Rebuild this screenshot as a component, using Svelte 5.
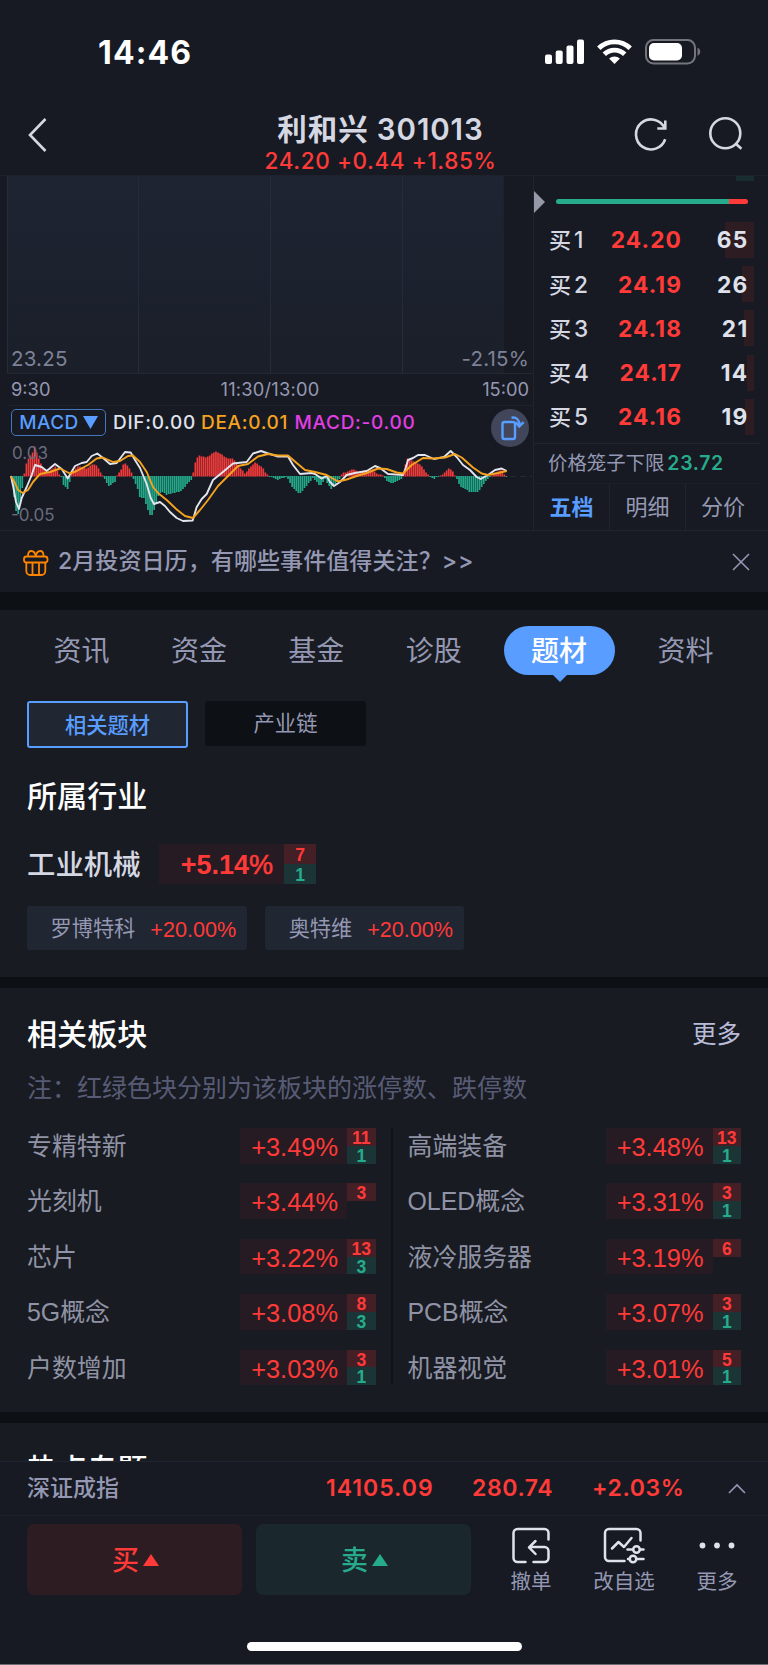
<script>
  const bids = [
    { n: 1, price: "24.20", vol: 65, depth: 29 },
    { n: 2, price: "24.19", vol: 26, depth: 12 },
    { n: 3, price: "24.18", vol: 21, depth: 10 },
    { n: 4, price: "24.17", vol: 14, depth: 7 },
    { n: 5, price: "24.16", vol: 19, depth: 9 }
  ];
  const tabs = ["资讯", "资金", "基金", "诊股", "题材", "资料"];
  const stocks = [
    { name: "罗博特科", pct: "+20.00%" },
    { name: "奥特维", pct: "+20.00%" }
  ];
  // up = 涨停数, down = 跌停数
  const sectors = [
    [
      { name: "专精特新", pct: "+3.49%", up: 11, down: 1 },
      { name: "光刻机", pct: "+3.44%", up: 3 },
      { name: "芯片", pct: "+3.22%", up: 13, down: 3 },
      { name: "5G概念", pct: "+3.08%", up: 8, down: 3 },
      { name: "户数增加", pct: "+3.03%", up: 3, down: 1 }
    ],
    [
      { name: "高端装备", pct: "+3.48%", up: 13, down: 1 },
      { name: "OLED概念", pct: "+3.31%", up: 3, down: 1 },
      { name: "液冷服务器", pct: "+3.19%", up: 6 },
      { name: "PCB概念", pct: "+3.07%", up: 3, down: 1 },
      { name: "机器视觉", pct: "+3.01%", up: 5, down: 1 }
    ]
  ];

  let active = $state("题材");

  // MACD histogram: [x, height], bars are interpolated between the points
  const hist = [
    [11, 0], [12.7, -10], [15, -29], [17, -39], [19, -37], [21.3, -20], [23.3, -4],
    [25, 8], [28, 18], [32, 22], [34.7, 30], [37, 23], [40, 15], [43, 8], [47, 3],
    [55, 10], [59, 3], [61.7, -1], [63.3, -9], [67.7, -13], [70, -5], [71.7, 4],
    [78, 10], [87, 8], [93, 13], [97, 11], [101, 3], [103, 0], [107, -7], [109, -10],
    [115, -6], [117, 1], [121.7, 8], [124.3, 14], [128, 10], [131.7, 4], [133.3, -2],
    [137, -11], [140, -22], [144, -22], [147, -31], [151, -42], [154, -34], [157, -24],
    [159, -17], [163, -16], [167, -19], [172, -17], [180, -16], [185, -11], [192.5, -2],
    [194.3, 11], [197, 18], [199, 21], [207, 19], [215, 25], [222, 22], [227, 18],
    [233, 18], [237, 13], [245, 3], [250, 9], [255, 14], [260, 11], [263, 8], [267, 2],
    [270, 0], [277, -4], [286.7, -1], [293, -12], [299, -18], [305, -12], [313, -2],
    [320, -10], [325, -3], [331, -13], [340, -2], [342, 3], [352, 7], [360, 5],
    [372, 7], [377, 3], [383, 1], [386, -4], [392, -8], [402, -3], [404, 6],
    [407, 18], [412, 16], [415, 15], [422, 10], [427, 3], [430, -1], [434, -3],
    [438, 0], [443, 2], [449, 8], [453, 5], [456, -1], [460, -10], [470, -16],
    [478, -16], [483, -9], [490, 0], [497, 5], [502, 6], [505, 1], [507, -2]
  ];
  const at = x => {
    const i = hist.findIndex(p => p[0] >= x);
    if (i < 1) return 0;
    const [x0, y0] = hist[i - 1];
    const [x1, y1] = hist[i];
    return y0 + ((y1 - y0) * (x - x0)) / (x1 - x0);
  };
  const bars = [];
  for (let x = 12; x < 507.5; x += 2.06) bars.push({ x, h: Math.round(at(Math.min(x, 507))) });

  const dif = [
    [11, 68], [13.3, 79], [16, 94], [19, 101], [21.7, 90], [26.7, 79], [31.7, 67], [35, 57],
    [41.7, 59], [46.7, 63], [55, 56], [61.7, 61], [67.7, 70.5], [75, 58], [81.7, 55],
    [86.7, 54], [91.7, 48], [97.3, 45.5], [103, 50], [110, 56], [116.7, 55], [125, 44],
    [130.7, 44.5], [135, 52], [140, 60], [146.7, 76], [150.7, 90], [154, 96], [160, 94],
    [165, 98], [170, 104], [176.7, 110], [183, 113], [192.7, 112.5], [196.7, 99],
    [201.7, 91], [206.7, 86], [213, 72], [221.7, 65], [233, 55.5], [246.7, 54],
    [253, 45.5], [261, 43], [266.7, 45], [278, 48.5], [288, 48.5], [293, 57], [300, 66],
    [311.7, 65], [315, 66], [321.7, 70.5], [326.7, 68], [330, 74], [334, 78], [340, 74],
    [346.7, 67], [355, 65], [366.7, 63], [375, 58], [380, 60], [388, 66], [403, 67],
    [405.7, 60], [408, 52], [413, 50], [418, 47], [425, 47], [434, 51], [444, 49],
    [450.7, 43], [456.7, 49], [463, 57], [470, 62], [476.7, 69], [480.7, 71], [488, 67],
    [495, 62], [501.7, 60.5], [506.7, 63]
  ];
  const dea = [
    [11, 68.5], [15, 75], [18, 82], [22.7, 85], [28, 82], [33, 74], [40, 66], [50, 64],
    [60, 60.5], [70, 65.5], [76.7, 63], [88, 57], [96.7, 50.5], [103, 49.5], [113, 54],
    [120, 53], [128, 48], [133, 47.5], [140, 54], [146.7, 64], [153, 79], [158, 85],
    [166.7, 92], [176.7, 101.5], [185, 108], [193, 110], [200, 102], [208, 92],
    [218, 78], [230, 66], [238, 58], [248, 56], [258, 48.5], [268, 46], [278, 47.5],
    [288, 47.5], [296.7, 55], [305, 62], [315, 64], [326.7, 67], [338, 73.5],
    [346.7, 71.5], [356.7, 68], [366.7, 65], [378, 60.5], [386.7, 61], [396.7, 64.5],
    [403, 65.5], [411.7, 57], [423, 50], [433, 50.5], [445, 49.5], [455, 46],
    [461.7, 49.5], [473, 59.5], [481.7, 65.5], [488, 67], [498, 65], [506.7, 63]
  ];
  const line = pts => pts.map(p => p.join(",")).join(" ");
</script>

<div class="phone">
  <div class="status">
    <span class="time">14:46</span>
    <svg width="156" height="26" viewBox="0 0 156 26">
      <g fill="#fff">
        <rect x="0" y="15.5" width="7" height="9.5" rx="2" />
        <rect x="10.7" y="11.5" width="7" height="13.5" rx="2" />
        <rect x="21.5" y="6.5" width="7" height="18.5" rx="2" />
        <rect x="32" y="0.5" width="7" height="24.5" rx="2" />
        <path d="M69.500 25l-5.400-5.400a8.300 8.300 0 0 1 10.800 0z" />
      </g>
      <g fill="none" stroke="#fff" stroke-width="4.8">
        <path d="M53.800 9.300a22.300 22.300 0 0 1 31.400 0" />
        <path d="M59.300 15.300a14.500 14.500 0 0 1 20.400 0" />
      </g>
      <rect x="101" y="1" width="49" height="23.500" rx="7.5" fill="none" stroke="#73757b" stroke-width="2" />
      <rect x="104" y="4" width="33" height="17.5" rx="5" fill="#fff" />
      <path d="M152.500 8.500q2.800 1.300 2.800 4.300t-2.800 4.300z" fill="#73757b" />
    </svg>
  </div>

  <header>
    <svg class="back" width="20" height="36" viewBox="0 0 20 36">
      <path d="M17.500 2L2 18l15.500 16" />
    </svg>
    <div class="title">
      <h1>利和兴 301013</h1>
      <p>24.20 +0.44 +1.85%</p>
    </div>
    <svg class="refresh" width="36" height="36" viewBox="0 0 36 36">
      <path d="M32.200 22.300A15 15 0 1 1 31.500 10.800M32.300 3.500v8h-8" />
    </svg>
    <svg class="search" width="36" height="36" viewBox="0 0 36 36">
      <circle cx="17.3" cy="16.300" r="15" /><path d="M27.800 26.800l5.600 5" />
    </svg>
  </header>

  <div class="market">
    <div class="chart">
      <div class="price">
        <div class="grid"><i></i><i></i><i></i><i></i></div>
        <div class="limits"><span>23.25</span><span>-2.15%</span></div>
      </div>
      <div class="hours"><span>9:30</span><span>11:30/13:00</span><span>15:00</span></div>
      <div class="macd">
        <svg class="plot" width="534" height="123" viewBox="0 0 534 123">
          <path d="M10 68.500h522" stroke="#232936" stroke-dasharray="6 4" />
          {#each bars as b}
            <rect
              x={b.x - 0.85}
              y={b.h > 0 ? 68.5 - b.h : 68}
              width="1.7"
              height={Math.max(1, Math.abs(b.h))}
              fill={b.h > 0 ? "#f23a3a" : "#23a98a"} />
          {/each}
          <text x="12" y="50.5">0.03</text>
          <text x="11" y="112.5">-0.05</text>
          <polyline points={line(dif)} stroke="#e2e4ee" />
          <polyline points={line(dea)} stroke="#f5a21f" />
        </svg>
        <div class="legend">
          <button class="pick">MACD<svg width="15" height="13" viewBox="0 0 15 13"><path d="M0 0h15L7.500 13z" fill="#589dff" /></svg></button>
          <span class="dif">DIF:0.00</span>
          <span class="dea">DEA:0.01</span>
          <span class="val">MACD:-0.00</span>
          <button class="rotate" aria-label="横屏">
            <svg width="38" height="38" viewBox="0 0 38 38">
              <rect x="11.500" y="13" width="12.500" height="17" rx="2" />
              <path d="M20.500 8.700c5-.8 8 2.300 8.300 8M24.700 13.200l3.500 4.300 4.500-4.300" />
            </svg>
          </button>
        </div>
      </div>
    </div>

    <div class="book">
      <div class="top">
        <i class="arrow"></i>
        <i class="ratio"></i>
        <i class="ask"></i>
      </div>
      {#each bids as b}
        <div class="bid">
          <span class="lab">买<b>{b.n}</b></span>
          <span class="px">{b.price}</span>
          <span class="vol"><i style="width: {b.depth}px"></i><em>{b.vol}</em></span>
        </div>
      {/each}
      <div class="cage">价格笼子下限<b>23.72</b></div>
      <div class="modes"><span class="on">五档</span><span>明细</span><span>分价</span></div>
    </div>
  </div>

  <div class="notice">
    <svg width="28" height="28" viewBox="0 0 28 28" fill="none" stroke="#ff8400" stroke-width="1.8">
      <rect x="2" y="8.5" width="23.5" height="6" rx="2.5" />
      <path d="M4.300 14.500v8.500a4 4 0 0 0 4 4h11a4 4 0 0 0 4-4v-8.500M10.500 14.500V27M17 14.500V27M6 8c0-3 1-5 3.300-5C12 3 13.300 5.500 13.700 8.300 14.200 5.500 15.500 3 18.200 3c2.300 0 3.300 2 3.300 5" />
    </svg>
    <span>2月投资日历，有哪些事件值得关注？<b>&gt;&gt;</b></span>
    <svg class="close" width="18" height="18" viewBox="0 0 18 18"><path d="M1 1l16 16M17 1L1 17" /></svg>
  </div>

  <section class="theme">
    <nav>
      {#each tabs as t}
        <button class:active={t === active} onclick={() => (active = t)}>{t}</button>
      {/each}
    </nav>
    <div class="switch"><button class="on">相关题材</button><button>产业链</button></div>
    <h2>所属行业</h2>
    <div class="industry">
      <span class="name">工业机械</span>
      <span class="pct">+5.14<small>%</small></span>
      <span class="badge"><i class="up">7</i><i class="down">1</i></span>
    </div>
    <div class="stocks">
      {#each stocks as s}
        <div class="stock"><span>{s.name}</span><b>{s.pct}</b></div>
      {/each}
    </div>
  </section>

  <section class="related">
    <div class="head"><h2>相关板块</h2><a href="#more">更多</a></div>
    <p class="note">注：红绿色块分别为该板块的涨停数、跌停数</p>
    <div class="cols">
      {#each sectors as col}
        <div class="col">
          {#each col as s}
            <div class="row">
              <span class="name">{s.name}</span>
              <span class="pct">{s.pct}</span>
              <span class="badge">
                <i class="up">{s.up}</i>
                {#if s.down}<i class="down">{s.down}</i>{/if}
              </span>
            </div>
          {/each}
        </div>
      {/each}
    </div>
  </section>

  <section class="hot"><h2>热点专题</h2></section>

  <footer>
    <div class="index">
      <span class="name">深证成指</span>
      <b>14105.09</b><b>280.74</b><b>+2.03%</b>
      <svg width="18" height="11" viewBox="0 0 18 11"><path d="M1 10l8-8 8 8" /></svg>
    </div>
    <div class="actions">
      <button class="buy"><span>买</span><i></i></button>
      <button class="sell"><span>卖</span><i></i></button>
      <div class="tool">
        <svg width="40" height="38" viewBox="0 0 40 38">
          <path d="M37 13.500V7a4 4 0 0 0-4-4H6a4 4 0 0 0-4 4v25a4 4 0 0 0 4 4h8M22 36h11a4 4 0 0 0 4-4v-7a4 4 0 0 0-4-4H18M24 15l-6.500 6.300L24 28" transform="translate(.5 -1)" />
        </svg>
        <span>撤单</span>
      </div>
      <div class="tool wide">
        <svg width="42" height="38" viewBox="0 0 42 38">
          <path d="M37.500 13.500V6a4 4 0 0 0-4-4H6a4 4 0 0 0-4 4v24a4 4 0 0 0 4 4h15.500" />
          <path d="M9 21.500l6.500-6.500 5.500 5 7.500-9" />
          <path d="M24.500 22.500h5.500M37 22.500h3.500M25 32h2M33.500 32h7" />
          <circle cx="33.5" cy="22.5" r="3.3" /><circle cx="30" cy="32" r="3.3" />
        </svg>
        <span>改自选</span>
      </div>
      <div class="tool">
        <svg width="40" height="38" viewBox="0 0 40 38">
          <g fill="#dfe1ec" stroke="none"><circle cx="5.5" cy="18.5" r="2.9" /><circle cx="20" cy="18.5" r="2.9" /><circle cx="34.5" cy="18.5" r="2.9" /></g>
        </svg>
        <span>更多</span>
      </div>
    </div>
    <div class="home"></div>
  </footer>
</div>

<style>
  :global(body) {
    margin: 0;
    background: #171a22;
  }
  .phone {
    width: 768px;
    height: 1665px;
    overflow: hidden;
    display: flex;
    flex-direction: column;
    box-sizing: border-box;
    border-bottom: 1px solid #6a6c72;
    background: #171a22;
    color: #9598b3;
    font-family: Inter, "Noto Sans CJK SC", sans-serif;
    line-height: 1.2;
    white-space: nowrap;
  }
  .phone > * {
    flex-shrink: 0;
  }
  h1, h2, p {
    margin: 0;
  }
  i, em {
    font-style: normal;
  }
  button {
    margin: 0;
    padding: 0;
    border: 0;
    background: none;
    color: inherit;
    font: inherit;
  }
  svg {
    display: block;
    flex: none;
  }

  .status {
    height: 104px;
    box-sizing: border-box;
    padding: 0 67px 0 98px;
    display: flex;
    align-items: center;
    justify-content: space-between;
    color: #fff;
  }
  .time {
    padding-top: 2px;
    font-size: 32px;
    font-weight: 700;
    letter-spacing: 1.1px;
  }

  header {
    height: 72px;
    box-sizing: border-box;
    display: grid;
    grid-template-columns: 28px 20px 1fr 36px 39px 36px 24px;
    border-bottom: 1px solid #1e222c;
  }
  header svg {
    margin-top: 13px;
    fill: none;
    stroke: #d5d8e3;
    stroke-width: 2.6;
  }
  .back {
    grid-column: 2;
  }
  .title {
    grid-column: 3;
    padding-left: 46px;
    margin-right: -34px;
    text-align: center;
    color: #d5d8e3;
  }
  h1 {
    height: 50px;
    line-height: 50px;
    font-size: 29.5px;
    font-weight: 600;
    letter-spacing: 0.9px;
  }
  .title p {
    margin-top: -4px;
    line-height: 21px;
    font-size: 22.5px;
    font-weight: 500;
    letter-spacing: 0.6px;
    color: #ff3a38;
  }
  .refresh {
    grid-column: 4;
  }
  .search {
    grid-column: 6;
  }

  .market {
    height: 354px;
    display: flex;
    border-bottom: 1px solid #20242f;
  }
  .chart {
    width: 526px;
    padding-left: 7px;
    border-right: 1px solid #20242f;
  }
  .price {
    height: 197px;
    display: grid;
    border-bottom: 1px solid #232835;
  }
  .grid, .limits {
    grid-area: 1 / 1;
  }
  .grid {
    width: 497px;
    display: grid;
    grid-template-columns: 131px 132px 132px 1fr;
    background: linear-gradient(#1e2432, #1a1f29);
  }
  .grid i {
    border-left: 1px solid #252b38;
  }
  .grid i:last-child {
    border-right: 1px solid #1c212c;
  }
  .limits, .hours {
    display: flex;
    justify-content: space-between;
    padding: 0 4px;
  }
  .limits {
    align-items: flex-end;
    line-height: 28px;
    font-size: 20.5px;
    letter-spacing: 0.2px;
    color: #7e8298;
  }
  .hours {
    height: 31px;
    line-height: 31px;
    font-size: 18.3px;
    border-bottom: 1px solid #1e222c;
  }
  .hours span {
    flex: 1;
  }
  .hours span:nth-child(2) {
    text-align: center;
    letter-spacing: 0.2px;
  }
  .hours span:last-child {
    text-align: right;
  }
  .macd {
    display: grid;
  }
  .plot {
    grid-area: 1 / 1;
    margin: 2px 0 0 -7px;
  }
  .plot polyline {
    fill: none;
    stroke-width: 1.9;
    stroke-linejoin: round;
  }
  .plot text {
    font-size: 17px;
    fill: #686c7e;
  }
  .legend {
    grid-area: 1 / 1;
    height: 40px;
    display: flex;
    align-items: flex-start;
    padding: 3px 5px 0 4px;
    font-size: 19px;
    font-weight: 500;
    line-height: 27px;
    letter-spacing: 0.7px;
  }
  .pick {
    width: 95px;
    height: 27px;
    box-sizing: border-box;
    display: flex;
    align-items: center;
    justify-content: center;
    gap: 4px;
    border: 1.5px solid #4377bf;
    border-radius: 5px;
    line-height: 24px;
    letter-spacing: 0.4px;
    color: #589dff;
    margin-right: 7px;
  }
  .dif {
    width: 88px;
    color: #dfe1ec;
  }
  .dea {
    width: 93.5px;
    color: #f5a21f;
  }
  .val {
    flex: 1;
    color: #e23ee6;
  }
  .rotate {
    border-radius: 50%;
    background: #41465a;
  }
  .rotate svg {
    fill: none;
    stroke: #589dff;
    stroke-width: 2.4;
  }

  .book {
    flex: 1;
    margin-right: 8px;
    display: flex;
    flex-direction: column;
  }
  .top {
    height: 42px;
    display: flex;
  }
  .arrow {
    margin: 15px 11px 0 0;
    border-left: 11px solid #9498a8;
    border-top: 11px solid transparent;
    border-bottom: 11px solid transparent;
    height: 0;
  }
  .ratio {
    width: 192px;
    height: 5px;
    margin-top: 23px;
    border-radius: 3px;
    background: linear-gradient(90deg, #27ab8d 173px, #ff3a38 173px);
  }
  .ask {
    width: 18px;
    height: 5px;
    margin-left: -12px;
    background: #172d2e;
  }
  .bid {
    height: 44.2px;
    display: grid;
    grid-template-columns: 60px 1fr 73px;
    align-items: center;
    padding: 0 6.5px 0 15px;
    font-size: 22.7px;
    font-weight: 700;
  }
  .lab {
    font-size: 22px;
    font-weight: 500;
    color: #d5d8e3;
  }
  .lab b {
    font-size: 22.7px;
    font-weight: 500;
    margin-left: 3px;
  }
  .px {
    margin-right: -1.5px;
    text-align: right;
    letter-spacing: 1.1px;
    color: #ff3a38;
  }
  .vol {
    display: grid;
    align-items: center;
    justify-items: end;
    color: #dfe1ec;
  }
  .vol i, .vol em {
    grid-area: 1 / 1;
  }
  .vol i {
    height: 36px;
    background: #2e1c23;
  }
  .vol em {
    margin-right: 5px;
    letter-spacing: 1.3px;
  }
  .cage {
    margin-top: 4px;
    height: 39px;
    display: flex;
    align-items: center;
    padding-left: 14px;
    font-size: 19.4px;
    border-top: 1px solid #20242f;
    border-bottom: 1px solid #1b1f28;
  }
  .cage b {
    margin-left: 3px;
    font-weight: 600;
    letter-spacing: 0.7px;
    color: #27ab8d;
  }
  .modes {
    flex: 1;
    display: grid;
    grid-template-columns: 75px 76px 1fr;
    text-align: center;
    font-size: 22px;
    line-height: 46px;
  }
  .modes span + span {
    border-left: 1px solid #20242f;
  }
  .modes .on {
    color: #589dff;
    font-weight: 700;
  }

  .notice {
    height: 61px;
    box-sizing: border-box;
    padding: 0 18px 0 22px;
    display: flex;
    align-items: center;
    font-size: 23.1px;
    font-weight: 500;
  }
  .notice span {
    flex: 1;
    padding-top: 1px;
    margin-left: 8px;
  }
  .notice b {
    font-weight: 500;
    letter-spacing: 0.8px;
  }
  .close {
    fill: none;
    stroke: #9598b3;
    stroke-width: 1.6;
  }

  section {
    background: #181b22;
    font-family: "Liberation Sans", "Noto Sans CJK SC", sans-serif;
  }
  h2 {
    color: #fff;
    font-size: 30.1px;
    line-height: 40px;
    font-weight: 500;
  }
  .theme {
    height: 367px;
    border-top: 18px solid #0d1014;
    padding: 0 27px;
  }
  nav {
    height: 80px;
    margin: 0 -27px;
    padding-left: 26px;
    display: flex;
    align-items: flex-start;
    padding-top: 16px;
    box-sizing: border-box;
  }
  nav button {
    position: relative;
    width: 111px;
    height: 49px;
    margin-right: 6.4px;
    border-radius: 25px;
    font-size: 28px;
    line-height: 52px;
  }
  nav button:last-child {
    margin-left: 9px;
  }
  nav .active {
    margin-left: 8px;
    background: #589dff;
    color: #fff;
    font-weight: 500;
  }
  nav .active::after {
    content: "";
    position: absolute;
    left: 48px;
    top: 48px;
    border: 8px solid transparent;
    border-bottom: 0;
    border-top-color: #589dff;
  }
  .switch {
    margin-top: 11px;
    height: 48px;
    display: flex;
    align-items: flex-start;
    gap: 17px;
  }
  .switch button {
    width: 161px;
    height: 45px;
    padding-top: 3px;
    border-radius: 3px;
    background: #0d1014;
    font-size: 21.3px;
  }
  .switch .on {
    height: 47px;
    padding-top: 4px;
    border: 2px solid #589dff;
    background: #202632;
    color: #589dff;
    font-weight: 500;
  }
  .theme h2 {
    margin-top: 28px;
  }
  .industry {
    margin-top: 27px;
    height: 40px;
    display: flex;
  }
  .industry .name {
    width: 132px;
    line-height: 42px;
    font-size: 28.4px;
    font-weight: 500;
    color: #d5d8e3;
  }
  .pct {
    background: #261b22;
    color: #ff3a38;
    text-align: right;
    box-sizing: border-box;
  }
  .industry .pct {
    width: 125px;
    padding-right: 11px;
    line-height: 42px;
    font-size: 27px;
    font-weight: 700;
  }
  .pct small {
    font-size: inherit;
    font-weight: 400;
    -webkit-text-stroke: 0.6px #ff3a38;
  }
  .badge {
    display: flex;
    flex-direction: column;
    width: 32px;
    text-align: center;
    font-weight: 700;
    font-size: 17.5px;
  }
  .badge i {
    height: 50%;
    line-height: 22px;
  }
  .up {
    background: #451f26;
    color: #ff3a38;
  }
  .down {
    background: #1b3536;
    color: #27ab8d;
  }
  .stocks {
    display: flex;
    gap: 18px;
    margin-top: 22px;
  }
  .stock {
    height: 42px;
    padding: 2px 11px 0 23.5px;
    display: flex;
    align-items: center;
    gap: 15px;
    border-radius: 3px;
    background: #202632;
    font-size: 21.2px;
  }
  .stock b {
    padding-top: 1px;
    font-size: 21.6px;
    font-weight: 400;
    color: #ff3a38;
  }

  .related {
    height: 424px;
    border-top: 11px solid #0d1014;
    padding: 0 27px;
  }
  .head {
    display: flex;
    align-items: center;
    justify-content: space-between;
    padding-top: 27px;
  }
  .head a {
    color: #b9bbd9;
    text-decoration: none;
    font-size: 24.5px;
  }
  .note {
    margin-top: 16px;
    line-height: 34px;
    font-size: 25px;
    color: #585b75;
  }
  .cols {
    margin-top: 23px;
    display: flex;
    height: 257px;
  }
  .col {
    width: 348.5px;
    display: flex;
    flex-direction: column;
    justify-content: space-between;
  }
  .col:last-child {
    flex: 1;
    margin-left: 15px;
    padding-left: 15px;
    border-left: 2px solid #0f1217;
  }
  .row {
    height: 35.5px;
    display: flex;
  }
  .row .name {
    flex: 1;
    font-size: 24.9px;
    line-height: 37px;
    color: #9093a5;
  }
  .row .pct {
    width: 107px;
    padding-right: 9px;
    font-size: 25.4px;
    line-height: 38px;
  }
  .row .badge {
    width: 28.5px;
  }
  .row .badge i {
    line-height: 20px;
  }

  .hot {
    height: 38px;
    overflow: hidden;
    border-top: 11px solid #0d1014;
    padding: 0 27px;
  }
  .hot h2 {
    margin-top: 27px;
  }

  footer {
    border-top: 1px solid #20242f;
    background: #171a22;
  }
  .index {
    height: 53px;
    display: grid;
    grid-template-columns: 299px 146px 120px 135px 20px;
    align-items: center;
    padding-left: 27px;
    border-bottom: 1px solid #1c2029;
    font-size: 23px;
  }
  .index b {
    font-weight: 600;
    color: #ff3a38;
    letter-spacing: 0.6px;
  }
  .index b:nth-child(2) {
    letter-spacing: 1px;
  }
  .index .name {
    font-weight: 500;
  }
  .index svg {
    margin-left: 1px;
    fill: none;
    stroke: #9598b3;
    stroke-width: 1.6;
  }
  .actions {
    display: flex;
    padding: 8px 0 0 27px;
    height: 72px;
  }
  .buy, .sell {
    width: 215px;
    height: 71px;
    margin-right: 14px;
    display: flex;
    align-items: center;
    justify-content: center;
    gap: 4px;
    border-radius: 7px;
    font-size: 27px;
    font-weight: 500;
  }
  .buy span, .sell span {
    padding: 3px 0 0 2px;
  }
  .buy {
    background: #2e1c23;
    color: #ff3a38;
  }
  .sell {
    background: #1a272d;
    color: #27ab8d;
  }
  .buy i, .sell i {
    border: 8px solid transparent;
    border-top: 0;
    border-bottom: 12px solid currentColor;
  }
  .tool {
    width: 92px;
    display: flex;
    flex-direction: column;
    align-items: center;
    padding-top: 3px;
    font-size: 20.5px;
    line-height: 34px;
  }
  .tool.wide {
    width: 94px;
  }
  .tool svg {
    fill: none;
    stroke: #dfe1ec;
    stroke-width: 2.5;
    stroke-linecap: round;
    stroke-linejoin: round;
  }
  .home {
    width: 275px;
    height: 9px;
    margin: 46px auto 0;
    border-radius: 5px;
    background: #fff;
  }
</style>
